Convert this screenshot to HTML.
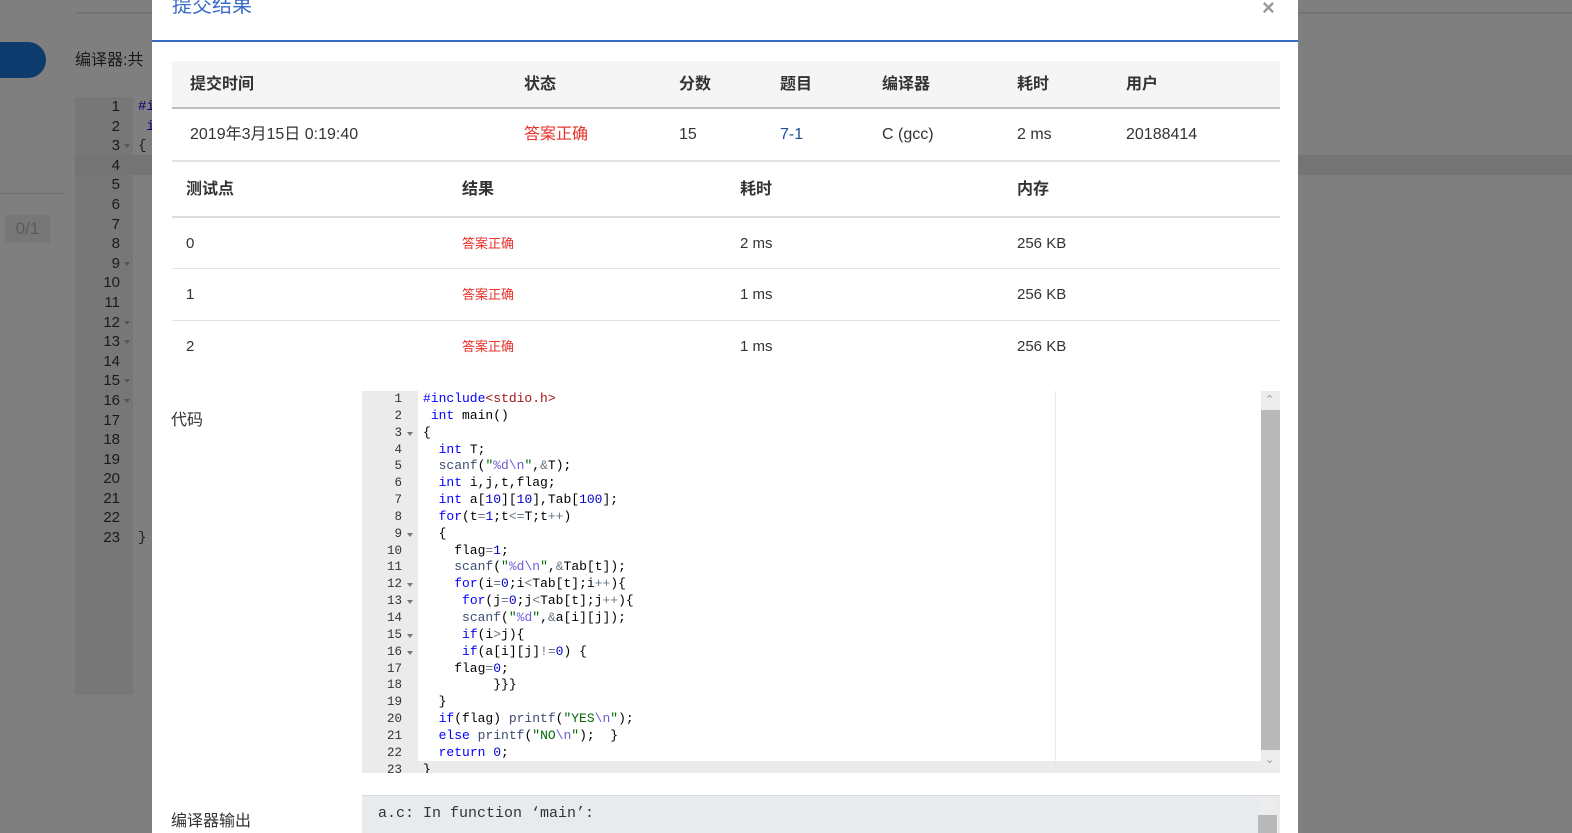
<!DOCTYPE html>
<html><head><meta charset="utf-8"><style>
*{margin:0;padding:0;box-sizing:border-box}
html,body{width:1572px;height:833px;overflow:hidden}
body{background:#7f7f7f;position:relative;font-family:"Liberation Sans","Noto Sans CJK SC",sans-serif;color:#333}
.abs{position:absolute}
.bgl{font-family:"Liberation Sans","Noto Sans CJK SC",sans-serif;color:#1a1a1a}
.modal{position:absolute;left:152px;top:-10px;width:1146px;height:843px;background:#fff}
.mono{font-family:"Liberation Mono","DejaVu Sans Mono",monospace}
.t{position:absolute;font-size:16px;white-space:nowrap;line-height:20px}
.b{font-weight:bold}
.red{color:#e8312a}
.code div{height:16.85px;line-height:16.85px;white-space:pre}
.k{color:#0000ff}.n{color:#0000cd}.f{color:#3c4c72}.s{color:#036a07}.e{color:#6b5dd6}.o{color:#687687}.r{color:#a31515}
.gut div{height:16.85px;line-height:16.85px;text-align:right;padding-right:16px;position:relative}
.ar::after{content:"";position:absolute;right:5px;top:7px;border:3.5px solid transparent;border-top:4px solid #777}
.bgut div{height:19.6px;line-height:19.6px;text-align:right;padding-right:13px;position:relative}
.bgut .ar::after{border-top-color:#555;top:8px;right:3px}
</style></head><body>
<div class="abs" style="left:75px;top:12px;width:1497px;height:2px;background:#747474"></div>
<div class="abs" style="left:-20px;top:42px;width:66px;height:36px;border-radius:18px;background:#0d3b6d"></div>
<div class="abs bgl" style="left:75px;top:46px;font-size:16px">编译器:共</div>
<div class="abs" style="left:0;top:193px;width:65px;height:1px;background:#6f6f6f"></div>
<div class="abs" style="left:5px;top:215px;width:45px;height:28px;background:#777;color:#5a5a5a;font-size:17px;text-align:center;line-height:28px">0/1</div>
<div class="abs" style="left:75px;top:97px;width:58px;height:598px;background:#777"></div>
<div class="abs" style="left:75px;top:155px;width:1497px;height:20px;background:#747474"></div>
<div class="abs bgut" style="left:75px;top:97px;width:58px;font-size:15px;color:#1a1a1a">
<div>1</div><div>2</div><div class="ar">3</div><div>4</div><div>5</div><div>6</div><div>7</div><div>8</div><div class="ar">9</div><div>10</div><div>11</div><div class="ar">12</div><div class="ar">13</div><div>14</div><div class="ar">15</div><div class="ar">16</div><div>17</div><div>18</div><div>19</div><div>20</div><div>21</div><div>22</div><div>23</div></div>
<div class="abs mono" style="left:138px;top:98px;font-size:14px;line-height:19.6px;color:#1a1a1a"><span style="color:#00007a">#i</span><br>&nbsp;<span style="color:#00007a">i</span><br>{<br><br><br><br><br><br><br><br><br><br><br><br><br><br><br><br><br><br><br><br>}</div>

<div class="modal">
<div class="t" style="left:20px;top:6px;font-size:20px;color:#3a6bc7">提交结果</div>
<div class="t" style="left:1110px;top:8px;font-size:22px;color:#999;font-weight:bold">×</div>
<div class="abs" style="left:0;top:50px;width:1146px;height:2px;background:#3a6bc7"></div>
<div class="abs" style="left:20px;top:71px;width:1108px;height:48px;background:#f5f5f5;border-bottom:2px solid #bdbdbd"></div>
<div class="t b" style="left:38px;top:85px">提交时间</div>
<div class="t b" style="left:372px;top:85px">状态</div>
<div class="t b" style="left:527px;top:85px">分数</div>
<div class="t b" style="left:628px;top:85px">题目</div>
<div class="t b" style="left:730px;top:85px">编译器</div>
<div class="t b" style="left:865px;top:85px">耗时</div>
<div class="t b" style="left:974px;top:85px">用户</div>
<div class="t" style="left:38px;top:135px">2019年3月15日 0:19:40</div>
<div class="t red" style="left:372px;top:135px">答案正确</div>
<div class="t" style="left:527px;top:135px">15</div>
<div class="t" style="left:628px;top:135px;color:#1e4e9c">7-1</div>
<div class="t" style="left:730px;top:135px">C (gcc)</div>
<div class="t" style="left:865px;top:135px">2 ms</div>
<div class="t" style="left:974px;top:135px">20188414</div>
<div class="abs" style="left:20px;top:170px;width:1108px;height:2px;background:#e3e3e6"></div>
<div class="t b" style="left:34px;top:190px">测试点</div>
<div class="t b" style="left:310px;top:190px">结果</div>
<div class="t b" style="left:588px;top:190px">耗时</div>
<div class="t b" style="left:865px;top:190px">内存</div>
<div class="abs" style="left:20px;top:226px;width:1108px;height:2px;background:#dcdde1"></div>
<div class="t" style="left:34px;top:244px;font-size:15px">0</div><div class="t red" style="left:310px;top:244px;font-size:13px">答案正确</div><div class="t" style="left:588px;top:244px;font-size:15px">2 ms</div><div class="t" style="left:865px;top:244px;font-size:15px">256 KB</div>
<div class="abs" style="left:20px;top:278px;width:1108px;height:1px;background:#e3e3e6"></div>
<div class="t" style="left:34px;top:295px;font-size:15px">1</div><div class="t red" style="left:310px;top:295px;font-size:13px">答案正确</div><div class="t" style="left:588px;top:295px;font-size:15px">1 ms</div><div class="t" style="left:865px;top:295px;font-size:15px">256 KB</div>
<div class="abs" style="left:20px;top:330px;width:1108px;height:1px;background:#e3e3e6"></div>
<div class="t" style="left:34px;top:347px;font-size:15px">2</div><div class="t red" style="left:310px;top:347px;font-size:13px">答案正确</div><div class="t" style="left:588px;top:347px;font-size:15px">1 ms</div><div class="t" style="left:865px;top:347px;font-size:15px">256 KB</div>
<div class="t" style="left:19px;top:421px">代码</div>
<div class="t" style="left:19px;top:822px">编译器输出</div>
</div>

<div class="abs" style="left:362px;top:391px;width:918px;height:382px;background:#fff;overflow:hidden">
<div class="abs" style="left:0;top:0;width:56px;height:382px;background:#ebebeb"></div>
<div class="abs" style="left:0;top:370px;width:918px;height:12px;background:#ebebeb"></div>
<div class="abs" style="left:693px;top:0;width:1px;height:382px;background:#e8e8e8"></div>
<div class="abs gut mono" style="left:0;top:0;width:56px;font-size:12.5px;color:#333">
<div>1</div><div>2</div><div class="ar">3</div><div>4</div><div>5</div><div>6</div><div>7</div><div>8</div><div class="ar">9</div><div>10</div><div>11</div><div class="ar">12</div><div class="ar">13</div><div>14</div><div class="ar">15</div><div class="ar">16</div><div>17</div><div>18</div><div>19</div><div>20</div><div>21</div><div>22</div><div>23</div></div>
<div class="abs code mono" style="left:61px;top:0;font-size:13px;color:#000">
<div><span class="k">#include</span><span class="r">&lt;stdio.h&gt;</span></div>
<div> <span class="k">int</span> main()</div>
<div>{</div>
<div>  <span class="k">int</span> T;</div>
<div>  <span class="f">scanf</span>(<span class="s">"<span class="e">%d\n</span>"</span>,<span class="o">&amp;</span>T);</div>
<div>  <span class="k">int</span> i,j,t,flag;</div>
<div>  <span class="k">int</span> a[<span class="n">10</span>][<span class="n">10</span>],Tab[<span class="n">100</span>];</div>
<div>  <span class="k">for</span>(t<span class="o">=</span><span class="n">1</span>;t<span class="o">&lt;=</span>T;t<span class="o">++</span>)</div>
<div>  {</div>
<div>    flag<span class="o">=</span><span class="n">1</span>;</div>
<div>    <span class="f">scanf</span>(<span class="s">"<span class="e">%d\n</span>"</span>,<span class="o">&amp;</span>Tab[t]);</div>
<div>    <span class="k">for</span>(i<span class="o">=</span><span class="n">0</span>;i<span class="o">&lt;</span>Tab[t];i<span class="o">++</span>){</div>
<div>     <span class="k">for</span>(j<span class="o">=</span><span class="n">0</span>;j<span class="o">&lt;</span>Tab[t];j<span class="o">++</span>){</div>
<div>     <span class="f">scanf</span>(<span class="s">"<span class="e">%d</span>"</span>,<span class="o">&amp;</span>a[i][j]);</div>
<div>     <span class="k">if</span>(i<span class="o">&gt;</span>j){</div>
<div>     <span class="k">if</span>(a[i][j]<span class="o">!=</span><span class="n">0</span>) {</div>
<div>    flag<span class="o">=</span><span class="n">0</span>;</div>
<div>         }}}</div>
<div>  }</div>
<div>  <span class="k">if</span>(flag) <span class="f">printf</span>(<span class="s">"YES<span class="e">\n</span>"</span>);</div>
<div>  <span class="k">else</span> <span class="f">printf</span>(<span class="s">"NO<span class="e">\n</span>"</span>);  }</div>
<div>  <span class="k">return</span> <span class="n">0</span>;</div>
<div>}</div>
</div>
<div class="abs" style="left:899px;top:0;width:19px;height:382px;background:#ececec"></div>
<div class="abs" style="left:899px;top:19px;width:19px;height:340px;background:#b8b8b8"></div>
<div class="abs" style="left:903px;top:2px;color:#999;font-size:11px">&#8963;</div>
<div class="abs" style="left:903px;top:362px;color:#999;font-size:11px">&#8964;</div>
</div>

<div class="abs" style="left:362px;top:795px;width:918px;height:38px;background:#e8ebee;border-top:1px solid #d5d8dc"></div>
<div class="abs mono" style="left:378px;top:805px;font-size:15px;color:#333">a.c: In function ‘main’:</div>
<div class="abs" style="left:1258px;top:797px;width:19px;height:36px;background:#ececec"></div>
<div class="abs" style="left:1258px;top:815px;width:19px;height:18px;background:#b8b8b8"></div>
</body></html>
